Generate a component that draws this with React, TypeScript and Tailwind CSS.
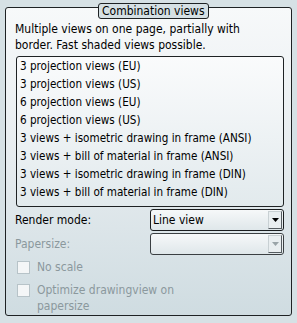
import React from "react";

const items = [
  "3 projection views (EU)",
  "3 projection views (US)",
  "6 projection views (EU)",
  "6 projection views (US)",
  "3 views + isometric drawing in frame (ANSI)",
  "3 views + bill of material in frame (ANSI)",
  "3 views + isometric drawing in frame (DIN)",
  "3 views + bill of material in frame (DIN)",
];

function Arrow({ disabled }: { disabled?: boolean }) {
  return (
    <svg width="7" height="4" viewBox="0 0 7 4">
      <path d="M0 0H7L3.5 4Z" fill={disabled ? "#9aa4a8" : "#000"} />
    </svg>
  );
}

function Combo({ value, disabled }: { value?: string; disabled?: boolean }) {
  return (
    <div
      className={`flex h-[22px] w-[134px] rounded-[3px] border ${
        disabled ? "border-[#3a3f42]" : "border-[#1a1d1f]"
      } bg-gradient-to-b from-[#f6f8f9] to-[#dfe7ea]`}
    >
      <div className="flex-1 px-[2px] text-[12px] leading-[20px] text-black">{value}</div>
      <div className="my-[1px] mr-[1px] flex w-[14px] items-center justify-center border-t border-l border-t-[#c8d0d3] border-l-[#c8d0d3] border-r border-b border-r-[#555c60] border-b-[#555c60] bg-[#e9eef0]">
        <Arrow disabled={disabled} />
      </div>
    </div>
  );
}

function Check({ label }: { label: React.ReactNode }) {
  return (
    <div className="flex items-start gap-[7px]">
      <div className="mt-[2px] h-[13px] w-[13px] shrink-0 border border-[#b7c3c8] bg-[#f4f6f7]" />
      <div className="text-[#8b989d] leading-[16px]">{label}</div>
    </div>
  );
}

export default function App() {
  return (
    <div
      className="h-[323px] w-[297px] bg-[#d6e1e5] pt-[7px] pl-[5px] text-[11px]"
      style={{ fontFamily: "Tahoma, 'DejaVu Sans Condensed', 'Liberation Sans', sans-serif" }}
    >
      <div className="relative h-[309px] w-[287px] rounded-[3px] border border-[#1e2224] bg-gradient-to-b from-[#f7f9fa] via-[#e6ecef] to-[#cfdce1] pl-[9px] pr-[6px] pt-[13px]">
        <div className="absolute left-[92px] top-[-5px] h-[16px] whitespace-nowrap rounded-[3px] border border-[#1e2224] bg-[#d5e0e4] px-[3px] text-center text-[12px] leading-[14px] text-black">
          Combination views
        </div>
        <div className="text-[12px] leading-[16px] text-black">
          Multiple views on one page, partially with
          <br />
          border. Fast shaded views possible.
        </div>
        <div className="mt-[3px] ml-[1px] h-[151px] w-[268px] rounded-[3px] border border-[#1e2224] bg-gradient-to-b from-[#fafbfc] to-[#e2eaed] pl-[3px]">
          {items.map((t) => (
            <div key={t} className="h-[18px] text-[11.6px] leading-[18px] text-black">
              {t}
            </div>
          ))}
        </div>
        <div className="mt-[2px] flex items-center justify-between pr-[1px]">
          <span className="text-[12px] text-black">Render mode:</span>
          <Combo value="Line view" />
        </div>
        <div className="mt-[2px] flex items-center justify-between pr-[1px]">
          <span className="text-[12px] text-[#8b989d]">Papersize:</span>
          <Combo disabled />
        </div>
        <div className="mt-[4px] ml-[2px] flex flex-col gap-[7px] text-[12px]">
          <Check label="No scale" />
          <Check
            label={
              <>
                Optimize drawingview on
                <br />
                papersize
              </>
            }
          />
        </div>
      </div>
    </div>
  );
}
